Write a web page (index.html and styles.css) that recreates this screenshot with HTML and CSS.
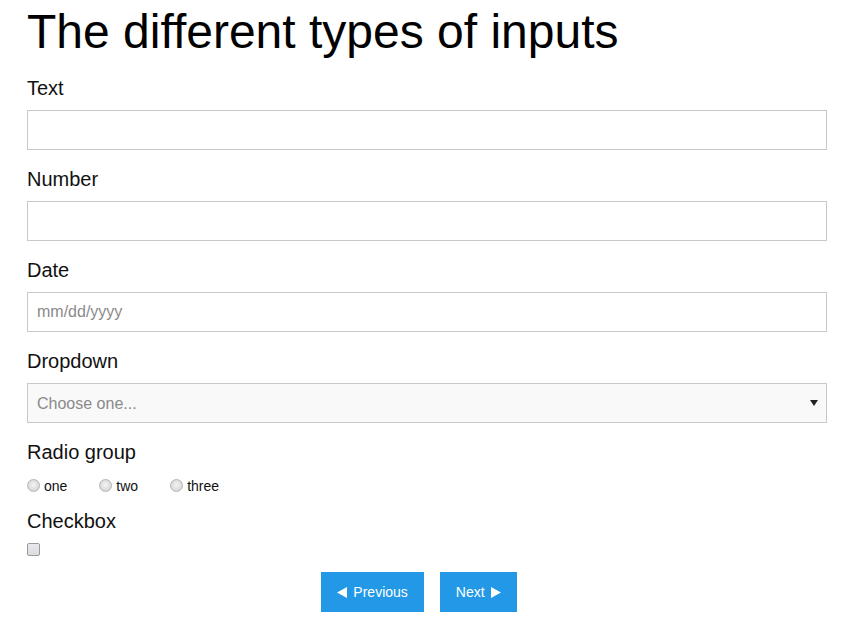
FILE: index.html
```html
<!DOCTYPE html>
<html lang="en">
<head>
<meta charset="utf-8">
<title>The different types of inputs</title>
<link rel="stylesheet" href="styles.css">
</head>
<body>
<main class="page">
  <h1 class="title">The different types of inputs</h1>
  <form class="form">
    <div class="field">
      <label class="field-label" for="f-text">Text</label>
      <input class="control" id="f-text" type="text">
    </div>
    <div class="field">
      <label class="field-label" for="f-number">Number</label>
      <input class="control" id="f-number" type="text" inputmode="numeric">
    </div>
    <div class="field">
      <label class="field-label" for="f-date">Date</label>
      <input class="control" id="f-date" type="text" placeholder="mm/dd/yyyy">
    </div>
    <div class="field">
      <label class="field-label" for="f-select">Dropdown</label>
      <div class="select-wrap">
        <select class="control select" id="f-select">
          <option>Choose one...</option>
        </select>
      </div>
    </div>
    <div class="field field-radio">
      <span class="field-label">Radio group</span>
      <div class="radio-row">
        <label class="radio-opt"><input type="radio" name="grp" class="radio"><span>one</span></label>
        <label class="radio-opt"><input type="radio" name="grp" class="radio"><span>two</span></label>
        <label class="radio-opt"><input type="radio" name="grp" class="radio"><span>three</span></label>
      </div>
    </div>
    <div class="field field-check">
      <label class="field-label" for="f-check">Checkbox</label>
      <input type="checkbox" id="f-check" class="check">
    </div>
    <div class="actions">
      <button type="button" class="btn">
        <svg class="tri" width="10" height="11" viewBox="0 0 10 11"><path d="M10 0 L10 11 L0 5.5 Z" fill="#fff"/></svg>
        <span>Previous</span>
      </button>
      <button type="button" class="btn">
        <span>Next</span>
        <svg class="tri" width="10" height="11" viewBox="0 0 10 11"><path d="M0 0 L0 11 L10 5.5 Z" fill="#fff"/></svg>
      </button>
    </div>
  </form>
</main>
</body>
</html>
```
FILE: styles.css
```css
* { box-sizing: border-box; }

html, body {
  margin: 0;
  padding: 0;
  background: #fff;
}

body {
  font-family: "Liberation Sans", Arial, sans-serif;
  color: #111;
}

.page {
  padding: 4px 20px 0 27px;
}

.title {
  margin: 0 0 17px;
  font-size: 48px;
  line-height: 55px;
  font-weight: normal;
  color: #000;
}

.field {
  margin-bottom: 17px;
}

.field-label {
  display: block;
  font-size: 20px;
  line-height: 23px;
  padding-top: 1px;
  margin-bottom: 10px;
  color: #111;
}

.control {
  display: block;
  width: 100%;
  height: 40px;
  margin: 0;
  border: 1px solid #c8c8c8;
  border-radius: 0;
  padding: 0 9px;
  font-family: "Liberation Sans", Arial, sans-serif;
  font-size: 16px;
  color: #222;
  background: #fff;
  outline: none;
}

.control::placeholder {
  color: #8a8a8a;
}

.select-wrap {
  position: relative;
}

.select {
  appearance: none;
  -webkit-appearance: none;
  background: #f9f9fa;
  color: #8a8a8a;
}

.select-wrap::after {
  content: "";
  position: absolute;
  right: 9px;
  top: 17px;
  width: 0;
  height: 0;
  border-left: 4px solid transparent;
  border-right: 4px solid transparent;
  border-top: 6px solid #222;
  pointer-events: none;
}

.field-radio {
  margin-bottom: 13px;
}

.radio-row {
  display: flex;
  align-items: center;
  height: 22px;
}

.radio-opt {
  display: flex;
  align-items: center;
  gap: 4px;
  margin-right: 32px;
  font-size: 14px;
  line-height: 16px;
  color: #111;
}

.radio-opt span {
  position: relative;
  top: 1px;
}

.radio {
  appearance: none;
  -webkit-appearance: none;
  width: 13px;
  height: 13px;
  margin: 0;
  border-radius: 50%;
  border: 1px solid #b4b4b4;
  background: radial-gradient(circle at 50% 45%, #f4f4f4 0, #e2e2e2 45%, #cfcfcf 100%);
}

.field-check {
  margin-bottom: 16px;
}

.check {
  appearance: none;
  -webkit-appearance: none;
  display: block;
  width: 13px;
  height: 13px;
  margin: 0;
  border: 1px solid #9a9a9a;
  border-radius: 2px;
  background: linear-gradient(#e9e9ee, #dcdce0);
}

.actions {
  display: flex;
  justify-content: center;
}

.btn {
  display: flex;
  align-items: center;
  gap: 6px;
  height: 40px;
  margin: 0 16px 0 0;
  padding: 0 16px;
  border: none;
  border-radius: 0;
  background: #2298e6;
  color: #fff;
  font-family: "Liberation Sans", Arial, sans-serif;
  font-size: 14px;
}

.tri {
  display: block;
}
```
